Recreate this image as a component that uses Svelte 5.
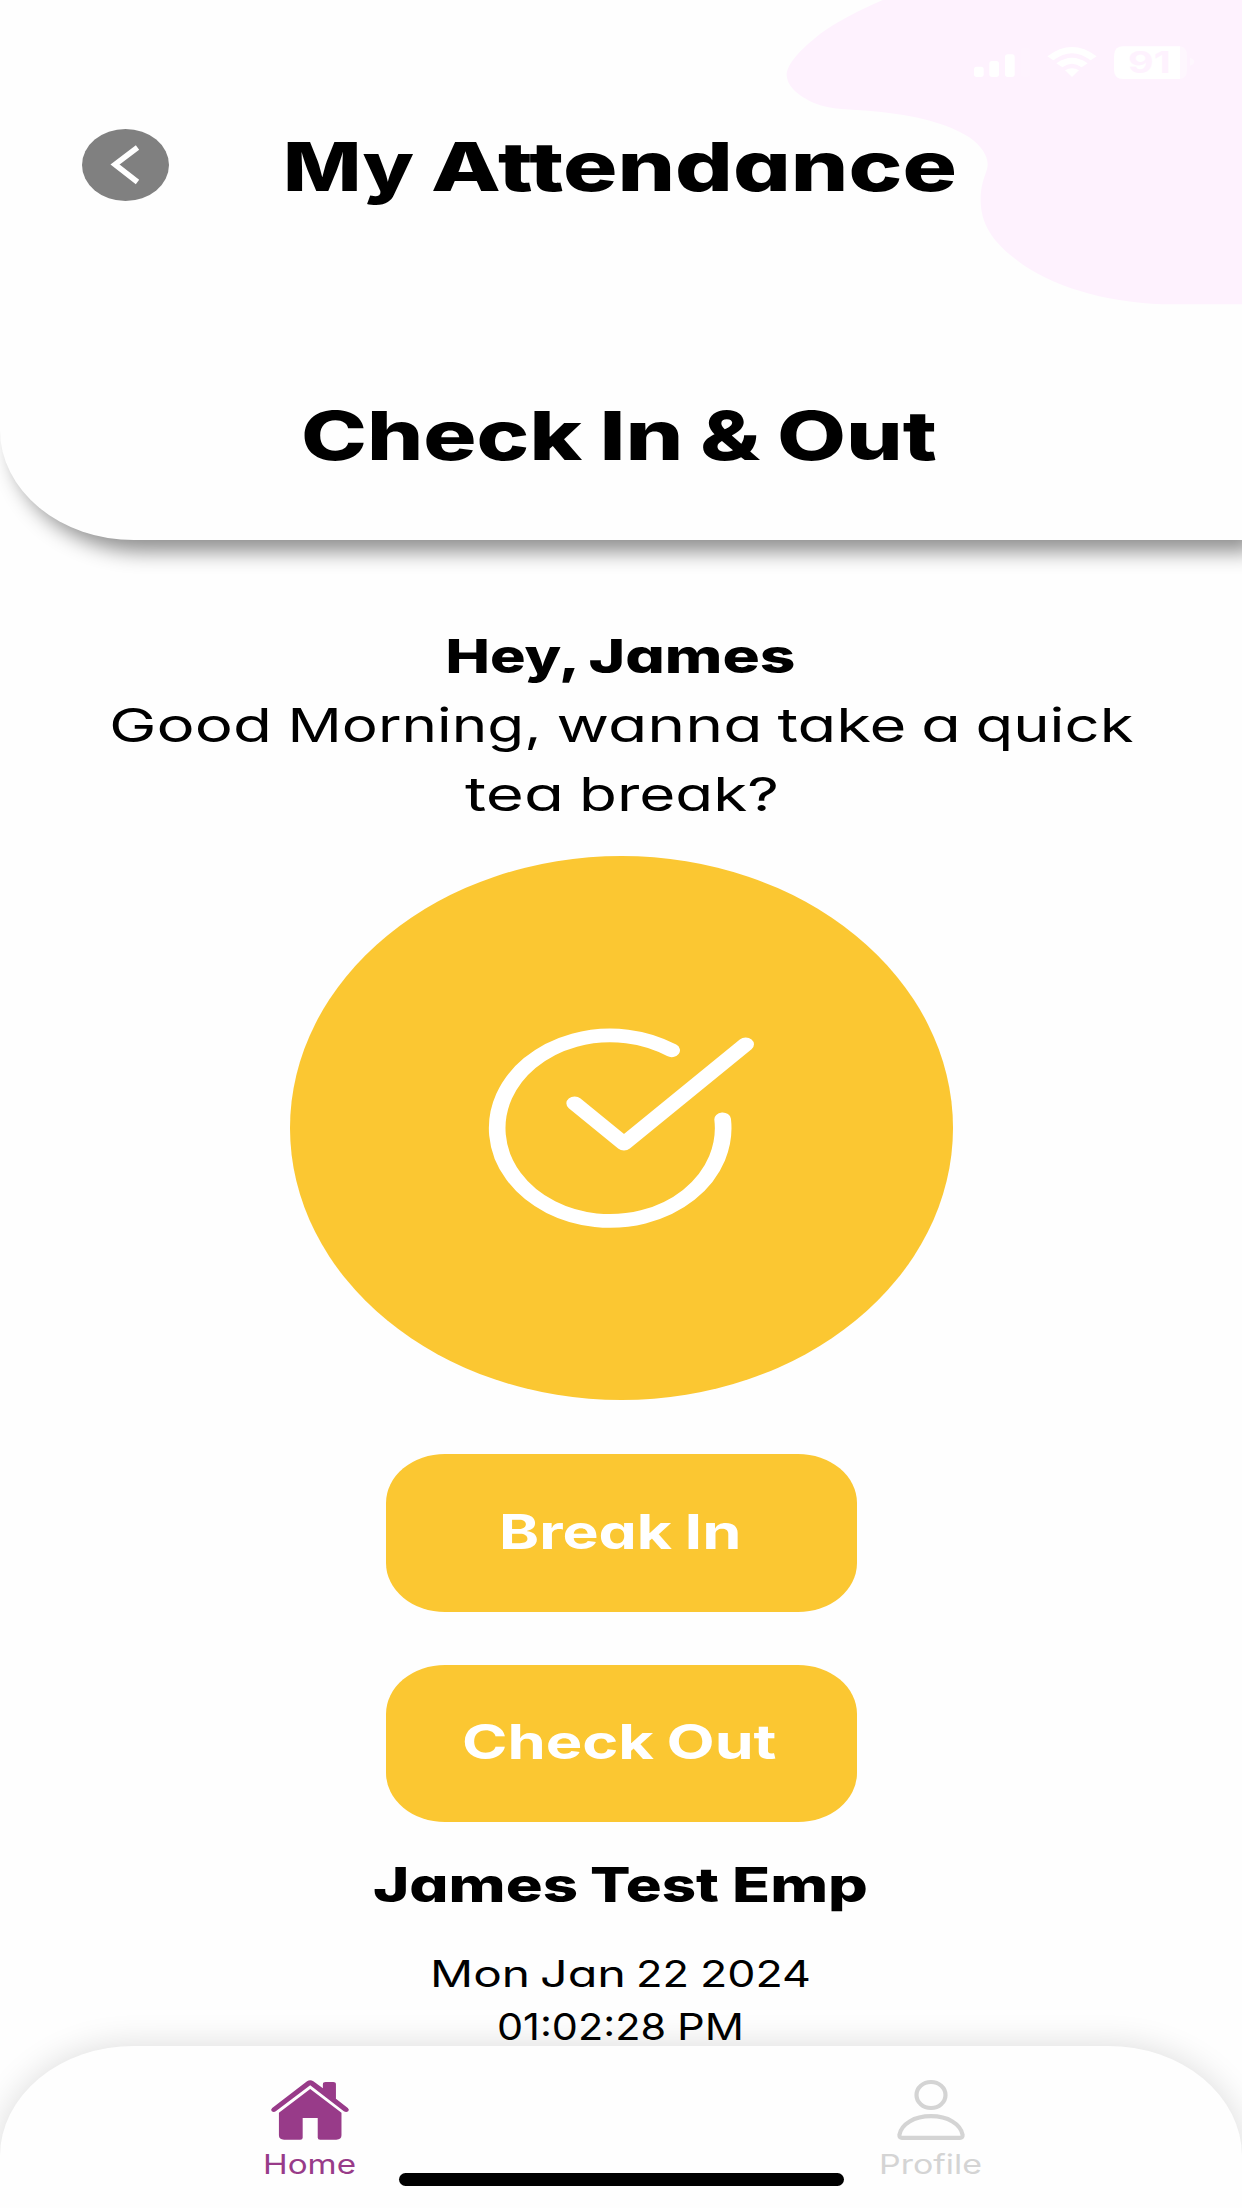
<script>
  // Every word is [text, x, width]; lines are centred on x = 621.
  const title = { words: [['My', 283, 131], ['Attendance', 431, 526]], width: 676, height: 72, base: 62, size: 68, weight: 800 };
  const subtitle = { words: [['Check', 301, 281], ['In', 599.5, 84], ['&', 700, 60], ['Out', 777, 160]], width: 638, height: 80, base: 60, size: 68, weight: 760 };
  const greeting = [
    { words: [['Hey,', 445, 132], ['James', 588, 207]], width: 353, height: 69, base: 48, size: 47, weight: 800 },
    { words: [['Good', 108.5, 163], ['Morning,', 287, 254], ['wanna', 556, 206], ['take', 777, 129], ['a', 920.5, 40], ['quick', 975, 158]], width: 1027, height: 69, base: 48, size: 46.5, weight: 400 },
    { words: [['tea', 465, 99], ['break?', 579, 200]], width: 316, height: 69, base: 48, size: 46.5, weight: 400 }
  ];
  const actions = [
    { words: [['Break', 498.5, 173], ['In', 684, 57]], width: 243, height: 60, base: 46, size: 47.5, weight: 650 },
    { words: [['Check', 462, 192], ['Out', 666.5, 110]], width: 316, height: 60, base: 46, size: 47.5, weight: 650 }
  ];
  const employee = { words: [['James', 373, 205], ['Test', 590, 129], ['Emp', 732, 136]], width: 498, height: 69, base: 45, size: 47.5, weight: 800 };
  const clock = [
    { words: [['Mon', 430, 100], ['Jan', 540, 86], ['22', 636, 53], ['2024', 700, 111]], width: 384, height: 53, base: 37, size: 37, weight: 400 },
    { words: [['01:02:28', 497, 169], ['PM', 677, 67]], width: 250, height: 53, base: 37, size: 37, weight: 400 }
  ];
  const homeLabel = { words: [['Home', 574.5, 93]], width: 93, height: 30, base: 22, size: 26.6, weight: 400 };
  const profileLabel = { words: [['Profile', 569.5, 103]], width: 103, height: 30, base: 22, size: 26.6, weight: 400 };
</script>

{#snippet line(l)}
  <svg class="line" width={l.width} height={l.height} viewBox="{621 - l.width / 2} 0 {l.width} {l.height}">
    <text y={l.base} font-size={l.size} font-weight={l.weight}>
      {#each l.words as [word, x, w]}<tspan {x} textLength={w} lengthAdjust="spacingAndGlyphs">{word}</tspan>{' '}{/each}
    </text>
  </svg>
{/snippet}

<div class="screen">
  <header>
    <svg class="backdrop" viewBox="0 0 1446 960" aria-hidden="true">
      <path class="blob" d="M368 0C296 32 232 64 180 102C120 150 80 192 80 226C82 262 120 290 160 308C215 332 270 326 340 334C470 346 560 370 628 412C664 438 682 466 683 492C684 518 662 538 662 600C662 690 720 745 790 795C900 868 1060 913 1240 913H1446V0Z" />
      <g class="status">
        <rect x="642" y="200" width="29" height="31" rx="8" />
        <rect x="688" y="183" width="29" height="48" rx="8" />
        <rect x="735" y="163" width="29" height="68" rx="8" />
        <rect class="faint" x="782" y="143" width="29" height="88" rx="8" />
        <path d="M862 169Q936 113 1010 169L992 181Q936 138 880 181ZM889 190Q936 157 983 190L965 202Q936 181 907 202ZM915 211Q936 198 957 211L936 231Z" />
        <path d="M1090 139H1260V237H1090Q1062 237 1062 209V167Q1062 139 1090 139Z" />
        <path class="spent" d="M1260 139Q1281 141 1281 167V209Q1281 235 1260 237ZM1290 173Q1303 177 1303 185T1290 197Z" />
        <text class="level" x="1104" y="219" textLength="128" lengthAdjust="spacingAndGlyphs">91</text>
      </g>
    </svg>
    <div class="titlebar">
      <button class="back" aria-label="Back">
        <svg viewBox="0 0 88 72"><path d="M55.5 18.5L33 35.5L55.5 53" /></svg>
      </button>
      {@render line(title)}
    </div>
    {@render line(subtitle)}
  </header>

  <main>
    <section class="greeting">
      {#each greeting as l}{@render line(l)}{/each}
    </section>
    <div class="badge">
      <svg viewBox="0 0 900 690" aria-hidden="true">
        <g transform="scale(1.218 1)">
          <path d="M496.7 118A278.3 278.3 0 1 0 622.3 325" />
          <path d="M257.8 277L379.3 398L679 100" />
        </g>
      </svg>
    </div>
    <div class="actions">
      {#each actions as l}<button class="action">{@render line(l)}</button>{/each}
    </div>
    <section class="employee">
      {@render line(employee)}
      <div class="clock">
        {#each clock as l}{@render line(l)}{/each}
      </div>
    </section>
  </main>

  <nav>
    <div class="tab active">
      <svg class="icon" width="78" height="60" viewBox="0 0 197 180" preserveAspectRatio="none">
        <path d="M91 4Q99 -3 107 4L131 25V13Q131 6 138 6H157Q164 6 164 13V56L194 84Q199 89 195 94Q190 98 184 94L99 16L12 94Q7 98 2 94Q-2 89 3 84Z" />
        <path d="M99 27L178 98V166Q178 179 165 179H124Q118 179 118 173V114H80V173Q80 179 74 179H33Q20 179 20 166V98Z" />
      </svg>
      {@render line(homeLabel)}
    </div>
    <div class="tab">
      <svg class="icon outline" width="68" height="60" viewBox="0 0 68 60">
        <ellipse cx="34" cy="15" rx="14.5" ry="13" />
        <path d="M5 57.8Q2.3 57.8 2.4 54.8C4.5 44 17 36.2 34 36.2S63.500 44 65.600 54.8Q65.700 57.800 63 57.800Z" />
      </svg>
      {@render line(profileLabel)}
    </div>
    <div class="indicator"></div>
  </nav>
</div>

<style>
  :global(body) { margin: 0; background: #fefefe; }
  .screen {
    width: 1242px;
    height: 2208px;
    display: grid;
    grid-template-rows: 540px 1506px 162px;
    overflow: hidden;
    font-family: Inter, "Open Sans", sans-serif;
    font-feature-settings: "cv11";
    color: #000;
    background: #fefefe;
  }
  button { border: 0; padding: 0; font: inherit; color: inherit; }
  .line { display: block; overflow: visible; fill: currentColor; flex: none; }
  header {
    position: relative;
    box-sizing: border-box;
    padding-top: 129px;
    display: flex;
    flex-direction: column;
    align-items: center;
    justify-content: flex-start;
    gap: 199px;
    background: #fefefe;
    border-bottom-left-radius: 134px 110px;
    box-shadow: 12px 12px 20px rgba(0, 0, 0, 0.43);
  }
  .backdrop { position: absolute; top: 0; right: 0; width: 482px; height: 320px; }
  .blob { fill: #fef2fe; }
  .status { fill: #fff; }
  .faint { opacity: 0.08; }
  .spent { opacity: 0.4; }
  .level { fill: #fef2fe; font-size: 88px; font-weight: 650; }
  .titlebar {
    position: relative;
    width: 100%;
    display: grid;
    grid-template-columns: 283px 1fr;
    height: 72px;
  }
  .back {
    width: 87px;
    height: 72px;
    margin-left: 82px;
    border-radius: 50%;
    background: #808080;
  }
  .back svg { display: block; width: 88px; height: 72px; }
  .back path { fill: none; stroke: #fff; stroke-width: 5.5; }
  main { display: flex; flex-direction: column; align-items: center; }
  .greeting {
    padding-top: 85px;
    display: flex;
    flex-direction: column;
    align-items: center;
  }
  .badge {
    flex: none;
    margin-top: 24px;
    width: 663px;
    height: 544px;
    border-radius: 50%;
    background: #fbc732;
    display: flex;
    align-items: center;
    justify-content: center;
  }
  .badge svg { width: 300px; height: 230px; margin-right: 3px; margin-bottom: 4px; }
  .badge path {
    fill: none;
    stroke: #fff;
    stroke-width: 41px;
    stroke-linecap: round;
    stroke-linejoin: round;
  }
  .actions { margin-top: 54px; display: flex; flex-direction: column; gap: 53px; }
  .action {
    width: 471px;
    height: 157.5px;
    border-radius: 59px / 49px;
    background: #fbc732;
    color: #fff;
    display: flex;
    align-items: center;
    justify-content: center;
  }
  .employee {
    padding-top: 35px;
    display: flex;
    flex-direction: column;
    align-items: center;
  }
  .clock { margin-top: 24px; display: flex; flex-direction: column; align-items: center; }
  nav {
    position: relative;
    display: grid;
    grid-template-columns: 1fr 1fr;
    background: #fefefe;
    border-radius: 134px 134px 0 0 / 110px 110px 0 0;
    box-shadow: 0 0 34px rgba(0, 0, 0, 0.14);
  }
  .tab {
    padding: 34px 2px 0 0;
    display: flex;
    flex-direction: column;
    align-items: center;
    gap: 12px;
    color: #d4d4d4;
  }
  .tab.active { color: #983b89; }
  .icon { fill: currentColor; overflow: visible; }
  .outline { fill: none; stroke: currentColor; stroke-width: 4.2; }
  .indicator {
    position: absolute;
    left: 399px;
    bottom: 22px;
    width: 445px;
    height: 13px;
    border-radius: 8px;
    background: #000;
  }
</style>
